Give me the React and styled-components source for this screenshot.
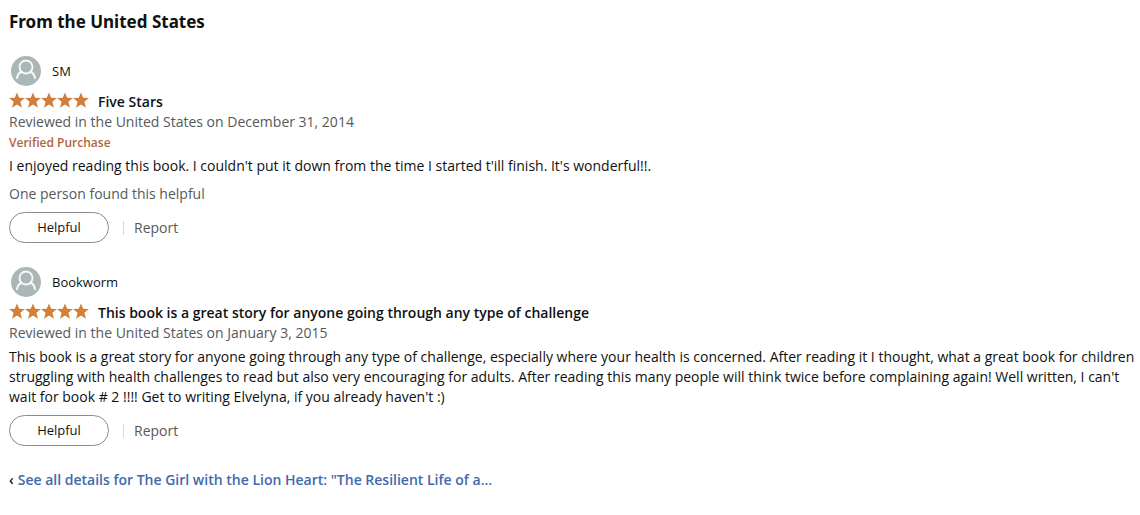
import React from "react";
import styled, { createGlobalStyle } from "styled-components";

const GlobalStyle = createGlobalStyle`
  *, *::before, *::after { box-sizing: border-box; }
  body {
    margin: 0;
    background: #fff;
    color: #0f1111;
    font: 14px/20px "Open Sans", "Noto Sans", sans-serif;
  }
`;

const Page = styled.main`
  padding: 10px 0 24px 9px;
`;

const Heading = styled.h2`
  margin: 0 0 22px;
  font-family: "Noto Sans", "Open Sans", sans-serif;
  font-size: 17px;
  line-height: 24px;
  font-weight: 700;
`;

const Review = styled.article`
  display: flex;
  flex-direction: column;
  align-items: flex-start;
  margin-bottom: 24px;
`;

const Profile = styled.div`
  display: flex;
  align-items: center;
  gap: 11px;
  padding-left: 2px;
  margin-bottom: 6px;
  font-size: 13px;
`;

const Avatar = styled.svg`
  display: block;
  width: 30px;
  height: 30px;
`;

const TitleRow = styled.div`
  display: flex;
  align-items: flex-start;
  gap: 9px;
`;

const Stars = styled.svg`
  flex: none;
  width: 80px;
  height: 18px;
  fill: #d17f3a;
`;

const Title = styled.h3`
  margin: 0;
  font-size: 14px;
  line-height: 20px;
  font-weight: 600;
`;

const Muted = styled.p`
  margin: 0;
  color: #565959;
`;

const Verified = styled.strong`
  padding-top: 2px;
  line-height: 18px;
  color: #b1643a;
  font-size: 12px;
  font-weight: 600;
`;

const Body = styled.p`
  margin: 4px 0 8px;
`;

const Actions = styled.div`
  display: flex;
  align-items: center;
  gap: 14px;
  margin-top: ${(p) => (p.$spaced ? "8px" : "0")};
`;

const HelpfulButton = styled.button`
  width: 100px;
  height: 31px;
  padding: 0 0 2px;
  border: 1px solid #888c8c;
  border-radius: 16px;
  background: #fff;
  color: #0f1111;
  font: inherit;
  font-size: 13px;
  cursor: pointer;
`;

const ReportLink = styled.a`
  display: flex;
  align-items: center;
  gap: 10px;
  color: #565959;
  text-decoration: none;

  &::before {
    content: "";
    width: 1px;
    height: 14px;
    background: #d5d9d9;
  }
`;

const DetailsLine = styled.div`
  display: flex;
  gap: 4px;
  font-weight: 600;
`;

const DetailsLink = styled.a`
  color: #3f69ad;
  text-decoration: none;
`;

const STAR = "M8 .5l2.200 5.300 5.700.3-4.500 3.700L13 15.700 8 12.600 3 15.700l1.600-5.900L.1 6.100 5.800 5.800z";

function Rating() {
  return (
    <Stars viewBox="0 0 80 18" role="img" aria-label="5 out of 5 stars">
      {[0, 16, 32, 48, 64].map((x) => (
        <path key={x} d={STAR} transform={`translate(${x} 0)`} />
      ))}
    </Stars>
  );
}

function ProfilePicture() {
  return (
    <Avatar viewBox="0 0 30 30" aria-hidden="true">
      <circle cx="15" cy="15" r="15" fill="#aab7b6" />
      <g fill="none" stroke="#fff" strokeOpacity="0.9" strokeWidth="1.900">
        <circle cx="15" cy="11" r="6.500" />
        <path d="M5.800 22.800c.5-3.200 2.300-6.300 5.300-7.300M24.200 22.800c-.5-3.200-2.300-6.300-5.300-7.300" />
      </g>
    </Avatar>
  );
}

const reviews = [
  {
    name: "SM",
    title: "Five Stars",
    date: "December 31, 2014",
    verified: true,
    body: "I enjoyed reading this book. I couldn't put it down from the time I started t'ill finish. It's wonderful!!.",
    votes: "One person found this helpful",
  },
  {
    name: "Bookworm",
    title: "This book is a great story for anyone going through any type of challenge",
    date: "January 3, 2015",
    body: "This book is a great story for anyone going through any type of challenge, especially where your health is concerned. After reading it I thought, what a great book for children struggling with health challenges to read but also very encouraging for adults. After reading this many people will think twice before complaining again! Well written, I can't wait for book # 2 !!!! Get to writing Elvelyna, if you already haven't :)",
  },
];

export default function App() {
  return (
    <>
      <GlobalStyle />
      <Page>
        <Heading>From the United States</Heading>
        {reviews.map((r) => (
          <Review key={r.name}>
            <Profile>
              <ProfilePicture />
              <span>{r.name}</span>
            </Profile>
            <TitleRow>
              <Rating />
              <Title>{r.title}</Title>
            </TitleRow>
            <Muted>Reviewed in the United States on {r.date}</Muted>
            {r.verified && <Verified>Verified Purchase</Verified>}
            <Body>{r.body}</Body>
            {r.votes && <Muted>{r.votes}</Muted>}
            <Actions $spaced={Boolean(r.votes)}>
              <HelpfulButton type="button">Helpful</HelpfulButton>
              <ReportLink href="#report">Report</ReportLink>
            </Actions>
          </Review>
        ))}
        <DetailsLine>
          <span>‹</span>
          <DetailsLink href="#details">
            See all details for The Girl with the Lion Heart: "The Resilient Life of a...
          </DetailsLink>
        </DetailsLine>
      </Page>
    </>
  );
}
